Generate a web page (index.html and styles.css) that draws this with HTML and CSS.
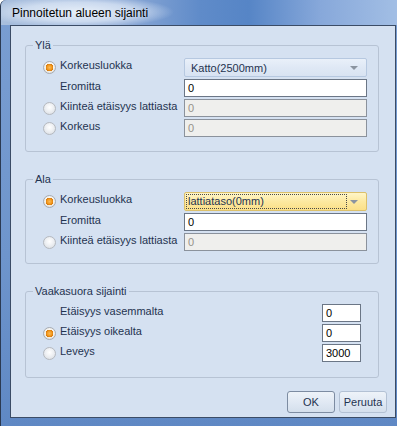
FILE: index.html
```html
<!DOCTYPE html>
<html lang="fi">
<head>
    <meta charset="UTF-8">
    <title>Pinnoitetun alueen sijainti</title>
    <link rel="stylesheet" href="styles.css">
</head>
<body>
    <div class="window">
        <div class="titlebar">
            <span class="title">Pinnoitetun alueen sijainti</span>
        </div>
        <div class="client">
            <!-- Ylä -->
            <fieldset class="group group-top">
                <legend>Ylä</legend>
                <div class="row row-combo">
                    <span class="radio checked"></span>
                    <span class="label">Korkeusluokka</span>
                    <div class="combo">
                        <span class="combo-text">Katto(2500mm)</span>
                        <span class="arrow"></span>
                    </div>
                </div>
                <div class="row">
                    <span class="radio-space"></span>
                    <span class="label">Eromitta</span>
                    <div class="input">0</div>
                </div>
                <div class="row">
                    <span class="radio"></span>
                    <span class="label">Kiinteä etäisyys lattiasta</span>
                    <div class="input disabled">0</div>
                </div>
                <div class="row">
                    <span class="radio"></span>
                    <span class="label">Korkeus</span>
                    <div class="input disabled">0</div>
                </div>
            </fieldset>

            <!-- Ala -->
            <fieldset class="group group-bottom">
                <legend>Ala</legend>
                <div class="row row-combo">
                    <span class="radio checked"></span>
                    <span class="label">Korkeusluokka</span>
                    <div class="combo focused">
                        <span class="combo-text">lattiataso(0mm)</span>
                        <span class="arrow"></span>
                    </div>
                </div>
                <div class="row">
                    <span class="radio-space"></span>
                    <span class="label">Eromitta</span>
                    <div class="input">0</div>
                </div>
                <div class="row">
                    <span class="radio"></span>
                    <span class="label">Kiinteä etäisyys lattiasta</span>
                    <div class="input disabled">0</div>
                </div>
            </fieldset>

            <!-- Vaakasuora sijainti -->
            <fieldset class="group group-horizontal">
                <legend>Vaakasuora sijainti</legend>
                <div class="row">
                    <span class="radio-space"></span>
                    <span class="label">Etäisyys vasemmalta</span>
                    <div class="input small">0</div>
                </div>
                <div class="row">
                    <span class="radio checked"></span>
                    <span class="label">Etäisyys oikealta</span>
                    <div class="input small">0</div>
                </div>
                <div class="row">
                    <span class="radio"></span>
                    <span class="label">Leveys</span>
                    <div class="input small">3000</div>
                </div>
            </fieldset>

            <div class="buttons">
                <button class="btn btn-default">OK</button>
                <button class="btn">Peruuta</button>
            </div>
        </div>
    </div>
</body>
</html>
```

FILE: styles.css
```css
/* General */
body {
    margin: 0;
    width: 397px;
    height: 426px;
    overflow: hidden;
    font-family: "Liberation Sans", Arial, sans-serif;
    font-size: 11px;
    color: #1f3350;
}

/* Window frame */
.window {
    width: 400px;
    height: 426px;
    box-sizing: border-box;
    padding-left: 9px;
    border-left: 1px solid #2b3a52;
    border-top-left-radius: 6px;
    background: linear-gradient(180deg, #7a9ed2 0%, #6e95cc 60%, #5f88c4 100%);
}

.titlebar {
    height: 25px;
    margin-left: -9px;
    padding-left: 11px;
    display: flex;
    align-items: center;
    border-top-left-radius: 6px;
    background:
        radial-gradient(ellipse 95px 16px at 78px 12px, rgba(235, 242, 250, 0.95) 0%, rgba(225, 235, 248, 0.7) 60%, rgba(220, 232, 246, 0) 100%),
        linear-gradient(90deg, #a9bfdd 0%, #8eaad6 30%, #5f8bc9 50%, #5685c6 62%, #87a8da 80%, #a3bfe5 100%);
}

.title {
    font-size: 12px;
    color: #000;
    padding-top: 1px;
}

/* Client area */
.client {
    width: 386px;
    height: 393px;
    box-sizing: border-box;
    border: 1px solid #3b4c66;
    background: #d5e1f1;
    padding: 0 8px 0 14px;
    display: flex;
    flex-direction: column;
}

/* Group boxes */
.group {
    margin: 12px 0 0 0;
    width: 354px;
    box-sizing: border-box;
    padding: 6px 10px 14px 17px;
    border: 1px solid #b7c3d4;
    border-radius: 3px;
    min-inline-size: 0;
}

.group-bottom {
    margin-top: 20px;
    padding-bottom: 12px;
}

.group-horizontal {
    margin-top: 20px;
    padding-bottom: 15px;
}

.group legend {
    padding: 0 2px;
    margin-left: -10px;
    line-height: 14px;
    color: #1f3350;
}

.row {
    display: flex;
    align-items: center;
    height: 18px;
    margin-top: 2px;
}

.row-combo {
    height: 19px;
    margin-top: 0;
    margin-bottom: 1px;
}

.radio,
.radio-space {
    width: 13px;
    height: 13px;
    margin-right: 4px;
    flex-shrink: 0;
    box-sizing: border-box;
    border-radius: 50%;
}

.radio {
    border: 1px solid #b5b9bf;
    background: radial-gradient(circle at 50% 40%, #ffffff 0%, #eef0f3 45%, #d6dadf 100%);
}

.radio.checked {
    border-color: #a6abb3;
    background:
        radial-gradient(circle, #fbb957 0%, #f29a1f 2.4px, #d97a0c 3.6px, rgba(255, 255, 255, 0) 3.9px),
        radial-gradient(circle at 50% 40%, #ffffff 0%, #f2efe8 55%, #d7d3cc 100%);
}

.label {
    width: 124px;
    align-self: flex-start;
    line-height: 14px;
    white-space: nowrap;
}

/* Inputs */
.input {
    width: 183px;
    height: 18px;
    box-sizing: border-box;
    border: 1px solid #6b7686;
    background: #fff;
    padding-left: 3px;
    line-height: 16px;
    color: #000;
}

.input.disabled {
    background: #efefed;
    border-color: #8b929c;
    color: #96918a;
}

.input.small {
    width: 39px;
}

/* Combo box */
.combo {
    width: 183px;
    height: 19px;
    box-sizing: border-box;
    border: 1px solid #b6c8e0;
    border-radius: 2px;
    background: linear-gradient(180deg, #e9f0f9 0%, #dfe8f5 50%, #d8e3f2 100%);
    display: flex;
    align-items: center;
    justify-content: space-between;
    padding: 0 8px 0 6px;
    color: #1f3350;
}

.combo.focused {
    border-color: #dcc06a;
    background: linear-gradient(180deg, #fff6c8 0%, #fde9a0 50%, #fbe088 100%);
    padding-left: 2px;
}

.combo.focused .combo-text {
    outline: 1px dotted #4a4a4a;
    outline-offset: 0;
    padding: 0 1px;
    flex-grow: 1;
    margin-right: 4px;
    line-height: 13px;
}

.arrow {
    width: 0;
    height: 0;
    border-left: 4px solid transparent;
    border-right: 4px solid transparent;
    border-top: 4px solid #8b94a0;
}

/* Horizontal group */
.group-horizontal .label {
    width: 262px;
}

.group-horizontal .row:first-of-type {
    margin-top: 0;
}

/* Buttons */
.buttons {
    display: flex;
    justify-content: flex-end;
    gap: 4px;
    margin-top: 13px;
}

.btn {
    width: 48px;
    height: 22px;
    padding: 0;
    font-family: inherit;
    font-size: 11px;
    color: #1f3350;
    border: 1px solid #b3c1d4;
    border-radius: 3px;
    background: linear-gradient(180deg, #eef3f9 0%, #e1e9f4 50%, #d4dfec 100%);
}

.btn-default {
    border-color: #7d8ca2;
}
```
